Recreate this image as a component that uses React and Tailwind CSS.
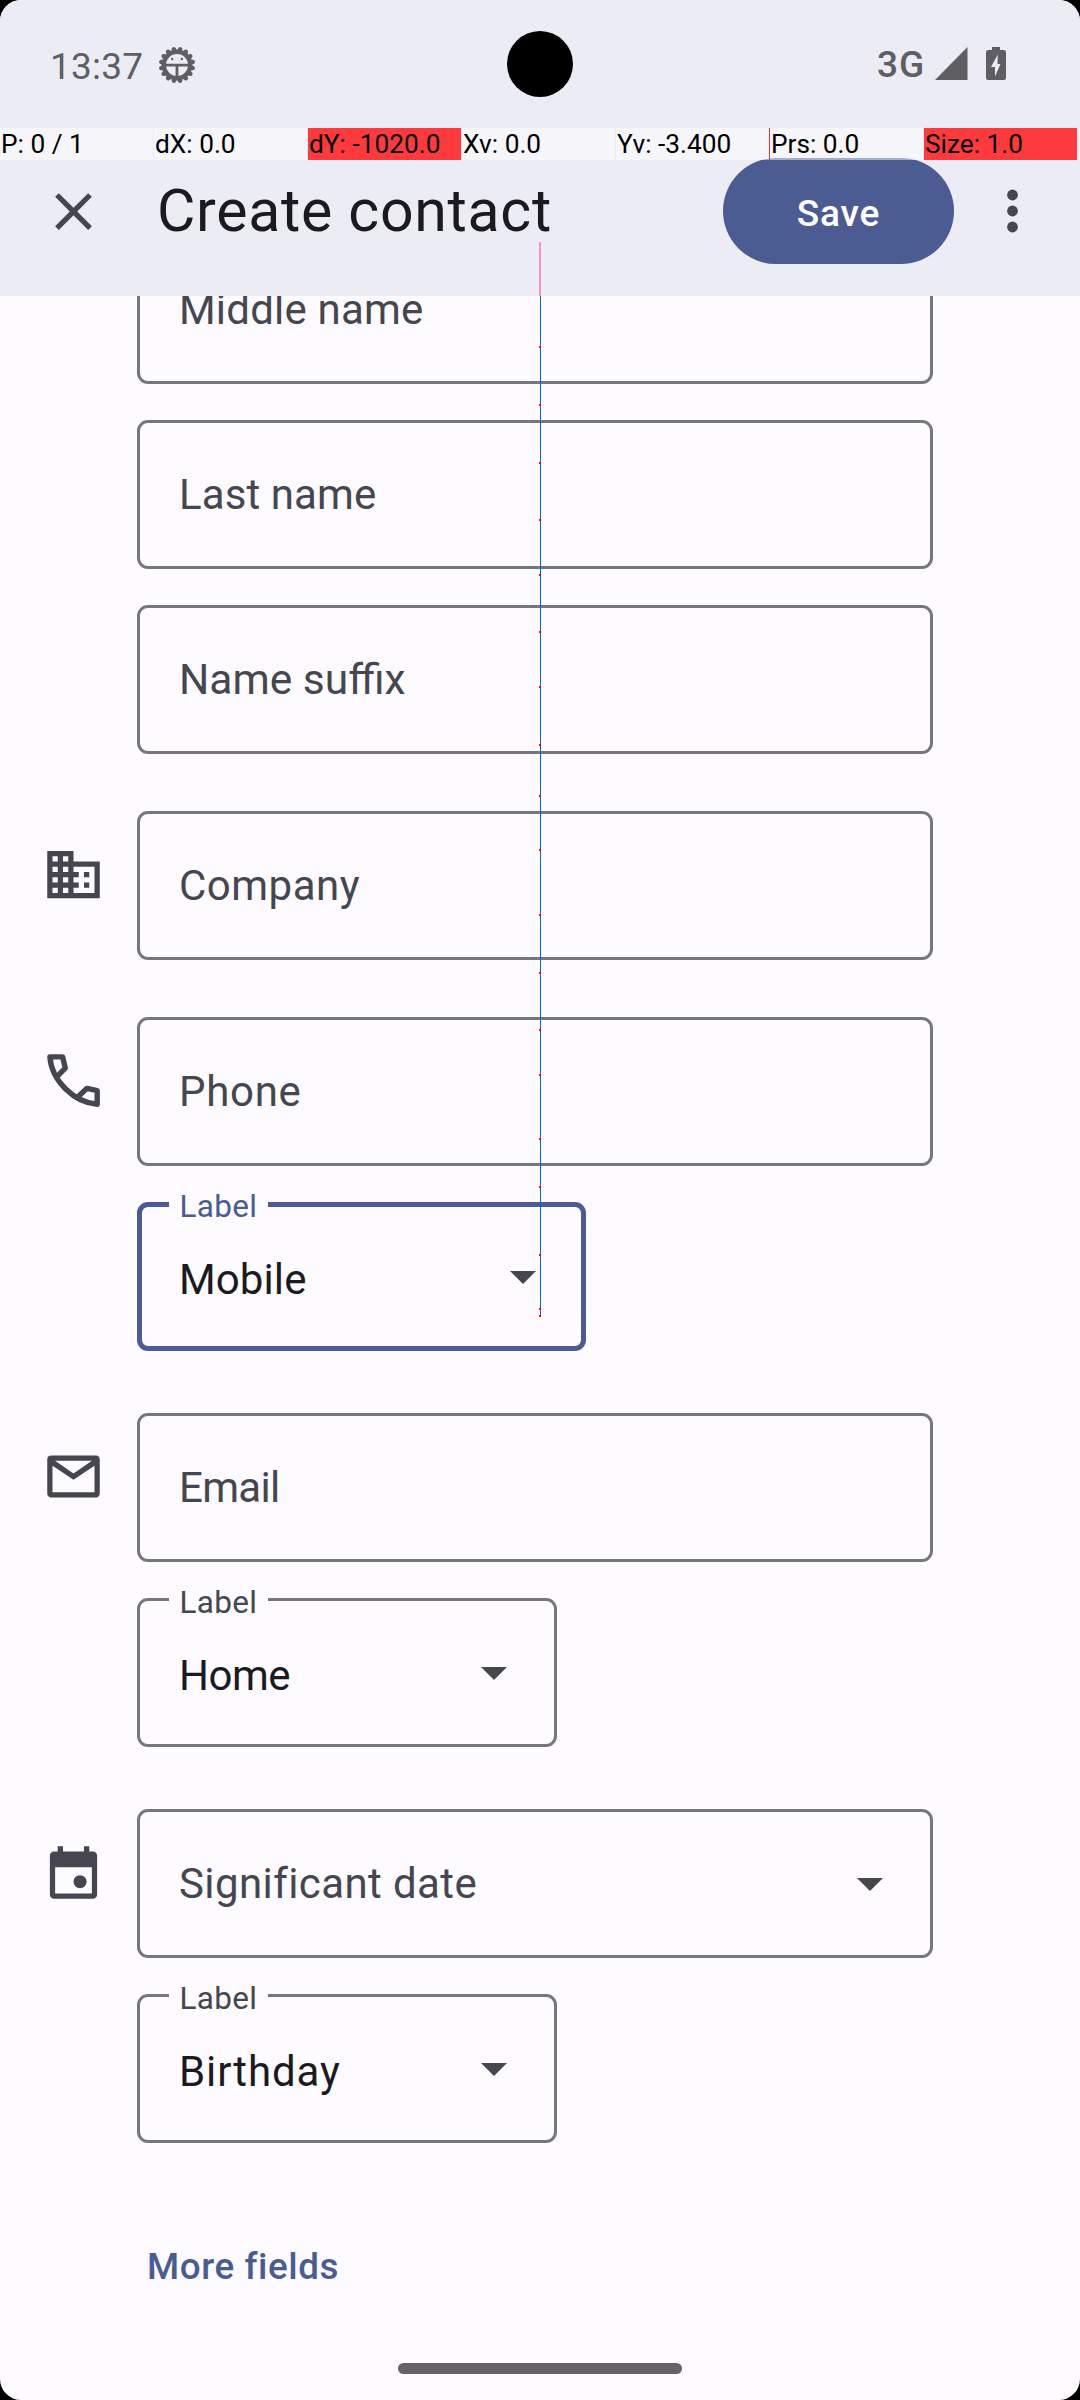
import React from "react";

const INK = "#45464f";

function GearIcon() {
  const spikes = Array.from({ length: 16 }, (_, i) => i * 22.5 + 11.25);
  return (
    <svg width="38" height="38" viewBox="-19 -19 38 38" fill="#5f5e63">
      {spikes.map((a) => (
        <path key={a} d="M-3.6 -13L-1.7 -17.4Q0 -19.2 1.7 -17.4L3.6 -13Z" transform={`rotate(${a})`} />
      ))}
      <circle r="13" fill="none" stroke="#5f5e63" strokeWidth="4" />
      <path d="M-12 -1.2H12V1.6H1.4V12H-1.4V1.6H-12Z" />
      <circle cx="-4.8" cy="-6" r="1.2" />
      <circle cx="4.8" cy="-6" r="1.2" />
    </svg>
  );
}

function BusinessIcon() {
  return (
    <svg width="63" height="63" viewBox="0 0 24 24" fill={INK}>
      <path d="M12 7V3H2v18h20V7H12zM6 19H4v-2h2v2zm0-4H4v-2h2v2zm0-4H4V9h2v2zm0-4H4V5h2v2zm4 12H8v-2h2v2zm0-4H8v-2h2v2zm0-4H8V9h2v2zm0-4H8V5h2v2zm10 12h-8v-2h2v-2h-2v-2h2v-2h-2V9h8v10zm-2-8h-2v2h2v-2zm0 4h-2v2h2v-2z" />
    </svg>
  );
}

function PhoneIcon() {
  return (
    <svg width="63" height="63" viewBox="-5 -5 63 63" fill="none" stroke={INK} strokeWidth="5.4" strokeLinejoin="round">
      <path d="M10.2 22.3L18.3 14.2L15.6 2.9H2.9C4.6 27 27.5 48.6 50.2 50.2V36.7L39.8 34.4L30.8 43" />
    </svg>
  );
}

function MailIcon() {
  return (
    <svg width="63" height="63" viewBox="0 0 24 24" fill={INK}>
      <path d="M22 5.5C22 4.6 21.4 4 20.5 4h-17C2.6 4 2 4.6 2 5.500v13c0 .9.6 1.500 1.500 1.500h17c.9 0 1.500-.6 1.500-1.500v-13zM19 6l-7 4.900L5 6h14zm1 12H4V7.900l8 5.300 8-5.300V18z" />
    </svg>
  );
}

function CalendarIcon() {
  return (
    <svg width="63" height="63" viewBox="0 0 24 24" fill={INK}>
      <path
        fillRule="evenodd"
        d="M6 2h2v2h8V2h2v2h1.400C20.300 4 21 4.700 21 5.600v14.800c0 .9-.7 1.600-1.600 1.600H4.600C3.700 22 3 21.300 3 20.400V5.600C3 4.700 3.700 4 4.600 4H6V2zM5 10v10h14V10H5z"
      />
      <circle cx="14.500" cy="15.500" r="2.500" />
    </svg>
  );
}

function Arrow() {
  return (
    <svg width="26" height="13" viewBox="0 0 26 13" className="shrink-0">
      <path d="M0 0H26L13 13Z" fill={INK} />
    </svg>
  );
}

function Field({ text, spacing, dropdown }) {
  return (
    <div className="flex h-[149px] w-[796px] shrink-0 items-center justify-between rounded-[11px] border-[3px] border-[#757680] pr-[47px] pl-[39px]">
      <span className={`leading-[50px] whitespace-nowrap text-[#45464f] ${spacing}`}>{text}</span>
      {dropdown && (
        <div className="pt-[2px]">
          <Arrow />
        </div>
      )}
    </div>
  );
}

function LabelSelect({ value, spacing, focused }) {
  return (
    <div
      className={
        focused
          ? "relative flex h-[149px] w-[449px] shrink-0 justify-between rounded-[11px] border-[5px] border-[#4a5c92] pt-[48px] pr-[45px] pl-[37px]"
          : "relative flex h-[149px] w-[420px] shrink-0 justify-between rounded-[11px] border-[3px] border-[#757680] pt-[50px] pr-[47px] pl-[39px]"
      }
    >
      <span
        className={
          focused
            ? "absolute top-[-16px] left-[27px] w-[99px] bg-[#fdfbff] pl-[10.500px] text-[31.5px] leading-[32px] tracking-[0.3px] text-[#4a5c92]"
            : "absolute top-[-14px] left-[29px] w-[99px] bg-[#fdfbff] pl-[10.500px] text-[31.5px] leading-[32px] tracking-[0.3px] text-[#45464f]"
        }
      >
        Label
      </span>
      <span className={`text-[42px] leading-[50px] whitespace-nowrap text-[#1b1b1f] ${spacing}`}>{value}</span>
      <div className="pt-[16px]">
        <Arrow />
      </div>
    </div>
  );
}

function Section({ icon, gap, children }) {
  return (
    <section className={`flex ${gap}`}>
      <div className="w-[137px] shrink-0 pt-[32px] pl-[42px]">{icon}</div>
      <div className="flex flex-col gap-[36px]">{children}</div>
    </section>
  );
}

const READOUT = [
  { text: "P: 0 / 1" },
  { text: "dX: 0.0" },
  { text: "dY: -1020.0", hot: true },
  { text: "Xv: 0.0" },
  { text: "Yv: -3.400" },
  { text: "Prs: 0.0" },
  { text: "Size: 1.0", hot: true },
];

const SAMPLES = [347, 405, 463, 520, 575, 632, 687, 745, 796, 850, 915, 973, 1030, 1075, 1139, 1187, 1255, 1309, 1316];

function PointerOverlay() {
  return (
    <>
      <div className="absolute top-[128px] left-0 flex h-[32px] w-[1080px] gap-px">
        {READOUT.map(({ text, hot }) => (
          <div
            key={text}
            className={
              hot
                ? "w-[153px] bg-[#ff3a3d] pl-[1px] text-[26.25px] leading-[32px] whitespace-nowrap text-black"
                : "w-[153px] bg-white/50 pl-[1px] text-[26.25px] leading-[32px] whitespace-nowrap text-black"
            }
          >
            {text}
          </div>
        ))}
      </div>
      <div className="absolute top-[128px] left-[769px] h-[32px] w-px bg-[#e8323c]" />
      <div className="absolute top-[242px] left-[539px] h-[54px] w-[2px] bg-[#f893bb]" />
      <svg className="absolute top-0 left-0" width="1080" height="1400" shapeRendering="crispEdges">
        <rect x="540" y="296" width="1" height="1020" fill="#0060f0" />
        {SAMPLES.map((y) => (
          <rect key={y} x="539" y={y - 1} width="2" height="2" fill="#ff0000" />
        ))}
      </svg>
    </>
  );
}

export default function App() {
  return (
    <div className="h-[2400px] w-[1080px] overflow-hidden bg-black font-['Roboto',sans-serif]">
      <div className="relative flex h-[2400px] flex-col overflow-hidden rounded-[21px] bg-[#fdfbff]">
        <div className="flex h-[128px] shrink-0 items-start justify-between bg-[#ececf5] pr-[74px] pl-[50px]">
          <div className="flex pt-[46px]">
            <span className="w-[108px] text-[37px] leading-[42px] tracking-[0.2px] text-[#5f5e63]">13:37</span>
            <GearIcon />
          </div>
          <div className="flex pt-[44px]">
            <span className="w-[58px] text-[37px] leading-[42px] font-medium tracking-[1px] text-[#5f5e63]">3G</span>
            <svg className="mt-[3px]" width="33" height="33" viewBox="0 0 33 33">
              <path d="M0 33L32.500 0V33Z" fill="#5f5e63" />
            </svg>
            <svg className="mt-[3px] ml-[18px]" width="20" height="33" viewBox="0 0 20 33">
              <path d="M6 0H14V3H17.500Q20 3 20 5.500V31Q20 33 18 33H2Q0 33 0 31V5.500Q0 3 2.500 3H6Z" fill="#5f5e63" />
              <path d="M11.800 7.500L5 20H9V29.500L14.500 17H11.500Z" fill="#ececf5" />
            </svg>
          </div>
        </div>

        <header className="flex h-[168px] shrink-0 items-center bg-[#ececf5] pl-[42px]">
          <svg className="mb-[2px]" width="63" height="63" viewBox="0 0 24 24">
            <path
              d="M19 6.410L17.590 5 12 10.590 6.410 5 5 6.410 10.590 12 5 17.590 6.410 19 12 13.410 17.590 19 19 17.590 13.410 12z"
              fill={INK}
            />
          </svg>
          <h1 className="mb-[2px] ml-[52px] w-[566px] text-[59px] leading-[70px] whitespace-nowrap tracking-[0.7px] text-[#1b1b1f]">
            Create contact
          </h1>
          <button className="mb-[2px] flex h-[106px] w-[231px] items-center justify-center rounded-full bg-[#4a5c92] pt-[6px] text-[37px] leading-[44px] font-medium tracking-[0.9px] text-white">
            Save
          </button>
          <svg className="mb-[2px] ml-[48px]" width="21" height="44" viewBox="0 0 21 44" fill={INK}>
            <circle cx="10.500" cy="6" r="5.400" />
            <circle cx="10.500" cy="22" r="5.400" />
            <circle cx="10.500" cy="38" r="5.400" />
          </svg>
        </header>

        <main className="flex h-[2104px] flex-col overflow-hidden">
          <Section gap="-mt-[61px]">
            <Field text="Middle name" spacing="text-[42px] tracking-[0.2px]" />
            <Field text="Last name" spacing="text-[42px] tracking-[0.1px]" />
            <Field text="Name suffix" spacing="text-[42.5px]" />
          </Section>
          <Section gap="mt-[57px]" icon={<BusinessIcon />}>
            <Field text="Company" spacing="text-[42px] tracking-[0.5px]" />
          </Section>
          <Section gap="mt-[57px]" icon={<PhoneIcon />}>
            <Field text="Phone" spacing="text-[42px] tracking-[0.7px]" />
            <LabelSelect value="Mobile" spacing="tracking-[0.1px]" focused />
          </Section>
          <Section gap="mt-[62px]" icon={<MailIcon />}>
            <Field text="Email" spacing="text-[42px] tracking-[-0.7px]" />
            <LabelSelect value="Home" spacing="tracking-[-0.5px]" />
          </Section>
          <Section gap="mt-[62px]" icon={<CalendarIcon />}>
            <Field text="Significant date" spacing="text-[42px] tracking-[0.4px]" dropdown />
            <LabelSelect value="Birthday" spacing="tracking-[0.9px]" />
          </Section>
          <button className="mt-[102px] ml-[147px] self-start text-[36.75px] leading-[44px] font-medium whitespace-nowrap tracking-[0.6px] text-[#4a5c92]">
            More fields
          </button>
          <div className="mt-[74px] h-[11px] w-[284px] shrink-0 self-center rounded-full bg-[#656368]" />
        </main>

        <div className="absolute top-[31px] left-[507px] size-[66px] rounded-full bg-black" />
        <PointerOverlay />
      </div>
    </div>
  );
}
